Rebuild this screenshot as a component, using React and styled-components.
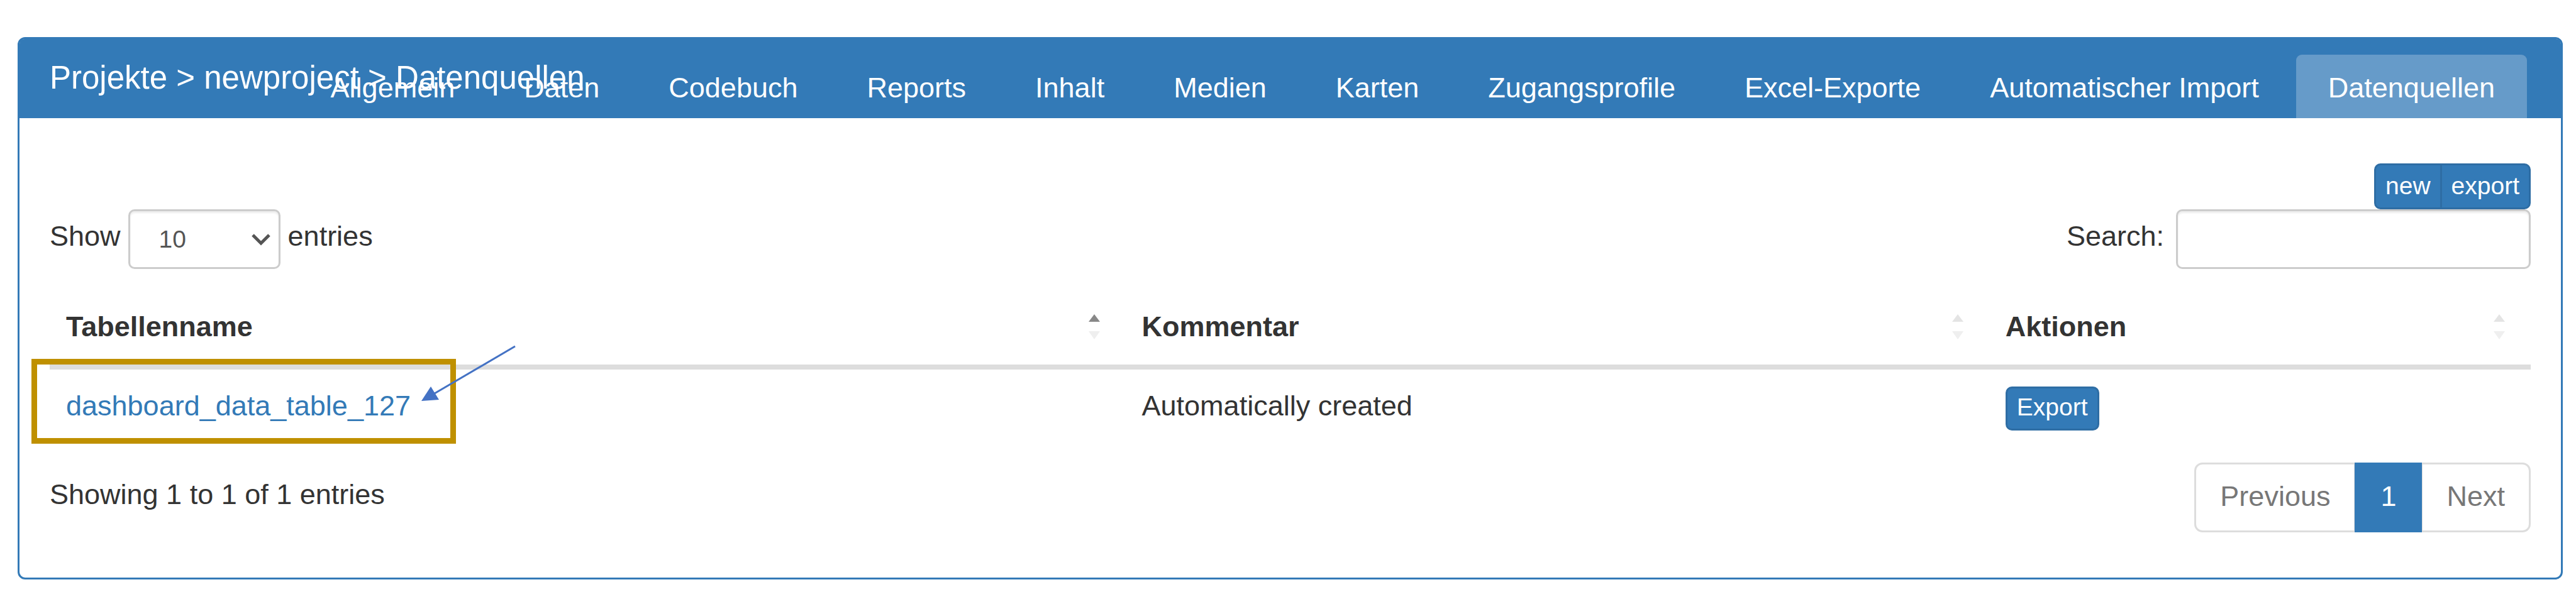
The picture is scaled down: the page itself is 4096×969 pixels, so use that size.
import React from "react";
import styled, { createGlobalStyle, css } from "styled-components";

const blue = "#337ab7";
const darkBlue = "#2e6da4";
const line = "#ddd";

const GlobalStyle = createGlobalStyle`
  *, *::before, *::after { box-sizing: border-box; }
  body {
    margin: 0;
    background: #fff;
    color: #333;
    font-family: "Liberation Sans", Arial, sans-serif;
    font-size: 45px;
    line-height: 64px;
  }
`;

const Page = styled.div`
  padding: 59px 21px 46px 28px;
`;

const Panel = styled.main`
  border: 3px solid ${blue};
  border-radius: 12px;
`;

/* Title and tabs share one grid cell, so long titles run under the tabs. */
const PanelHeader = styled.header`
  display: grid;
  grid-template-areas: "bar";
  padding: 25px 48px 0;
  background: ${blue};
  color: #fff;
  border-radius: 8px 8px 0 0;
`;

const Title = styled.h1`
  grid-area: bar;
  margin: 8px 0 0;
  font-size: 51px;
  line-height: 58px;
  font-weight: 400;
  white-space: nowrap;
`;

const Tabs = styled.nav`
  grid-area: bar;
  display: flex;
  justify-content: flex-end;
  gap: 8px;
  padding-right: 6px;
`;

const Tab = styled.a`
  padding: 21px 51px 16px;
  border-radius: 9px 9px 0 0;
  background: ${({ $active }) => ($active ? "rgba(255, 255, 255, 0.25)" : "transparent")};
  color: #fff;
  text-decoration: none;
  white-space: nowrap;
`;

const PanelBody = styled.div`
  padding: 72px 48px;
`;

const ButtonGroup = styled.div`
  display: flex;
  justify-content: flex-end;
`;

const Button = styled.button`
  padding: 1px 15px 5px;
  border: 3px solid ${darkBlue};
  border-radius: 10px;
  background: ${blue};
  color: #fff;
  font: inherit;
  font-size: 39px;
  line-height: 58px;
  cursor: pointer;

  ${ButtonGroup} & {
    padding-top: 4px;
  }
  ${ButtonGroup} &:not(:last-child) {
    border-radius: 10px 0 0 10px;
  }
  ${ButtonGroup} &:not(:first-child) {
    margin-left: -3px;
    border-radius: 0 10px 10px 0;
  }
`;

const Controls = styled.div`
  display: flex;
  justify-content: space-between;
`;

const Field = styled.div`
  display: flex;
  align-items: flex-start;
  gap: ${({ $gap }) => $gap}px;
`;

const FieldText = styled.label`
  padding-top: 11px;
`;

const control = css`
  height: 95px;
  border: 3px solid #ccc;
  border-radius: 10px;
  background: #fff;
  box-shadow: inset 0 3px 3px rgba(0, 0, 0, 0.075);
  color: #555;
  font: inherit;
  font-size: 39px;
`;

const SelectBox = styled.div`
  display: grid;
  grid-template-areas: "box";
  align-items: center;
  justify-items: end;
`;

const Select = styled.select`
  ${control}
  grid-area: box;
  width: 242px;
  padding: 0 46px;
  appearance: none;
`;

const Chevron = styled.svg`
  grid-area: box;
  width: 32px;
  height: 20px;
  margin-right: 15px;
  pointer-events: none;
`;

const SearchInput = styled.input`
  ${control}
  width: 564px;
  padding: 0 32px;
`;

const Table = styled.table`
  width: 100%;
  margin-top: 34px;
  border-collapse: separate;
  border-spacing: 0;
  table-layout: fixed;
`;

const HeadCell = styled.th`
  width: ${({ $width }) => $width};
  padding: 26px 41px 28px 26px;
  border-bottom: 8px solid ${line};
  text-align: left;
`;

const HeadContent = styled.div`
  display: flex;
  align-items: center;
  justify-content: space-between;
`;

const SortIcon = styled.svg`
  width: 18px;
  height: 40px;
`;

const Cell = styled.td`
  position: relative;
  padding: 26px;
  vertical-align: baseline;
`;

const TableLink = styled.a`
  color: ${blue};
  text-decoration: none;
`;

const Highlight = styled.div`
  position: absolute;
  top: -17px;
  left: -29px;
  width: 675px;
  height: 135px;
  border: 9px solid #bf9000;
  pointer-events: none;
`;

const Arrow = styled.svg`
  position: absolute;
  top: -40px;
  left: 589px;
  width: 154px;
  height: 94px;
  pointer-events: none;
`;

const Footer = styled.div`
  display: flex;
  justify-content: space-between;
  align-items: flex-start;
  margin-top: 25px;
`;

const Info = styled.div`
  padding-top: 19px;
`;

const Pagination = styled.nav`
  display: flex;
`;

const PageLink = styled.a`
  padding: 19px 38px 22px;
  border: 3px solid ${({ $active }) => ($active ? blue : line)};
  background: ${({ $active }) => ($active ? blue : "#fff")};
  color: ${({ $active }) => ($active ? "#fff" : "#777")};
  position: relative;
  z-index: ${({ $active }) => ($active ? 1 : 0)};
  text-decoration: none;

  &:first-child {
    border-radius: 13px 0 0 13px;
  }
  &:last-child {
    border-radius: 0 13px 13px 0;
  }
  & + & {
    margin-left: -2px;
  }
`;

const tabs = [
  "Allgemein",
  "Daten",
  "Codebuch",
  "Reports",
  "Inhalt",
  "Medien",
  "Karten",
  "Zugangsprofile",
  "Excel-Exporte",
  "Automatischer Import",
  "Datenquellen",
];

const columns = [
  { name: "Tabellenname", width: "43.36%", sorted: true },
  { name: "Kommentar", width: "34.81%" },
  { name: "Aktionen", width: "21.83%" },
];

const rows = [{ name: "dashboard_data_table_127", comment: "Automatically created" }];

export default function App() {
  return (
    <>
      <GlobalStyle />
      <Page>
        <Panel>
          <PanelHeader>
            <Title>Projekte &gt; newproject &gt; Datenquellen</Title>
            <Tabs>
              {tabs.map((tab) => (
                <Tab key={tab} href="#" $active={tab === "Datenquellen"}>
                  {tab}
                </Tab>
              ))}
            </Tabs>
          </PanelHeader>
          <PanelBody>
            <ButtonGroup>
              <Button type="button">new</Button>
              <Button type="button">export</Button>
            </ButtonGroup>
            <Controls>
              <Field $gap={12}>
                <FieldText htmlFor="length">Show</FieldText>
                <SelectBox>
                  <Select id="length" defaultValue="10">
                    <option>10</option>
                    <option>25</option>
                    <option>50</option>
                    <option>100</option>
                  </Select>
                  <Chevron viewBox="0 0 32 20" aria-hidden="true">
                    <path d="M3 3 L16 16 L29 3" fill="none" stroke="#555" strokeWidth="5" />
                  </Chevron>
                </SelectBox>
                <FieldText htmlFor="length">entries</FieldText>
              </Field>
              <Field $gap={19}>
                <FieldText htmlFor="search">Search:</FieldText>
                <SearchInput id="search" type="search" />
              </Field>
            </Controls>
            <Table>
              <thead>
                <tr>
                  {columns.map(({ name, width, sorted }) => (
                    <HeadCell key={name} scope="col" $width={width}>
                      <HeadContent>
                        {name}
                        <SortIcon viewBox="0 0 18 40" aria-hidden="true">
                          <path d="M9 0 L18 12 H0 Z" fill={sorted ? "#888" : "#e4e4e4"} />
                          <path d="M0 27 H18 L9 40 Z" fill="#efefef" />
                        </SortIcon>
                      </HeadContent>
                    </HeadCell>
                  ))}
                </tr>
              </thead>
              <tbody>
                {rows.map(({ name, comment }) => (
                  <tr key={name}>
                    <Cell>
                      <TableLink href="#">{name}</TableLink>
                      <Highlight />
                      <Arrow viewBox="0 0 154 94" aria-hidden="true">
                        <path d="M151 3 L23 78" stroke="#4472c4" strokeWidth="3" />
                        <path d="M2 90 L17 67 L30 88 Z" fill="#4472c4" />
                      </Arrow>
                    </Cell>
                    <Cell>{comment}</Cell>
                    <Cell>
                      <Button type="button">Export</Button>
                    </Cell>
                  </tr>
                ))}
              </tbody>
            </Table>
            <Footer>
              <Info>Showing 1 to 1 of 1 entries</Info>
              <Pagination>
                <PageLink href="#">Previous</PageLink>
                <PageLink href="#" $active>
                  1
                </PageLink>
                <PageLink href="#">Next</PageLink>
              </Pagination>
            </Footer>
          </PanelBody>
        </Panel>
      </Page>
    </>
  );
}
